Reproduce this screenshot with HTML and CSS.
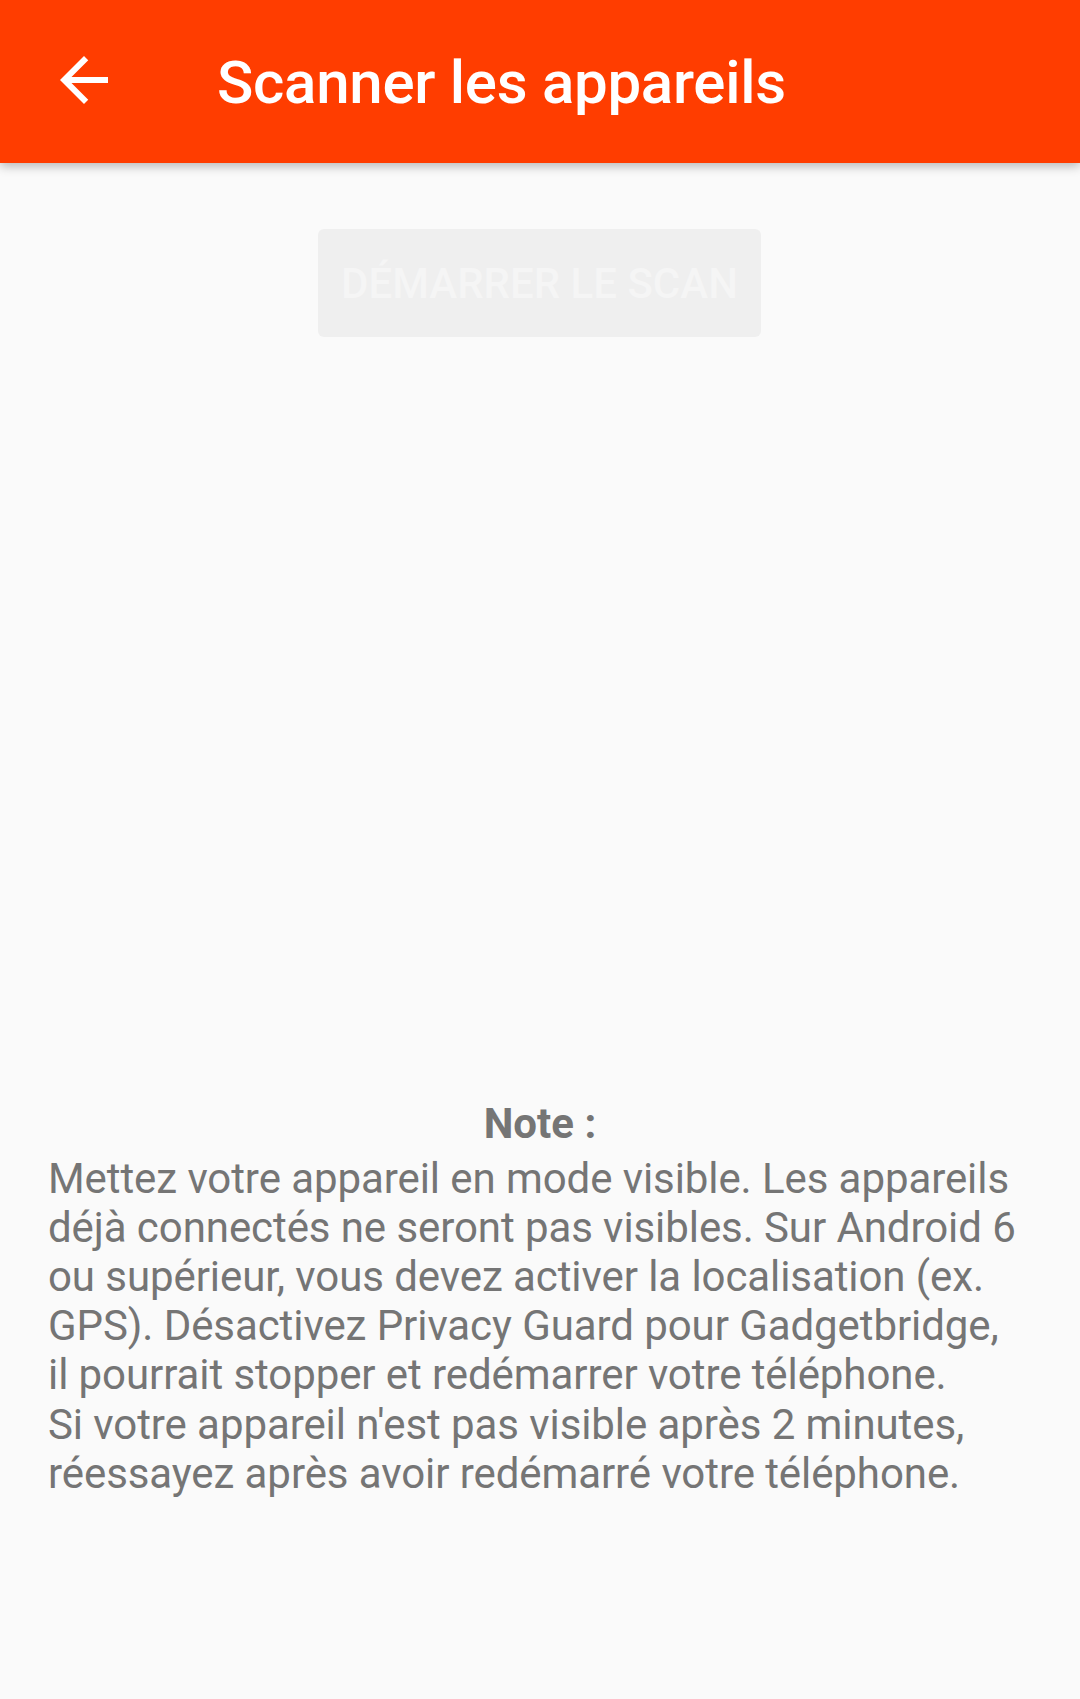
FILE: index.html
```html
<!DOCTYPE html>
<html lang="fr">
<head>
<meta charset="utf-8">
<title>Scanner les appareils</title>
<link rel="stylesheet" href="styles.css">
</head>
<body>
<div class="screen">
  <header class="toolbar">
    <button class="back" aria-label="Retour">
      <svg viewBox="0 0 24 24" width="72" height="72"><path fill="#fff" d="M20 11H7.83l5.59-5.59L12 4l-8 8 8 8 1.41-1.41L7.83 13H20v-2z"/></svg>
    </button>
    <h1 class="title">Scanner les appareils</h1>
  </header>
  <main class="content">
    <div class="scan-row">
      <button class="scan-btn" disabled>Démarrer le scan</button>
    </div>
    <div class="device-list"></div>
    <section class="note">
      <div class="note-title">Note :</div>
      <p class="note-body">Mettez votre appareil en mode visible. Les appareils<br>déjà connectés ne seront pas visibles. Sur Android 6<br>ou supérieur, vous devez activer la localisation (ex.<br>GPS). Désactivez Privacy Guard pour Gadgetbridge,<br>il pourrait stopper et redémarrer votre téléphone.<br>Si votre appareil n'est pas visible après 2 minutes,<br>réessayez après avoir redémarré votre téléphone.</p>
    </section>
  </main>
</div>
</body>
</html>
```
FILE: styles.css
```css
* { box-sizing: border-box; }
html, body { margin: 0; padding: 0; }
body {
  background: #fafafa;
  font-family: Roboto, "Noto Sans", sans-serif;
}
.screen {
  width: 1080px;
  height: 1699px;
  display: flex;
  flex-direction: column;
  overflow: hidden;
}
.toolbar {
  height: 163px;
  flex: none;
  background: #ff3d00;
  display: flex;
  align-items: center;
  box-shadow: 0 3px 10px rgba(0,0,0,0.28);
  position: relative;
  z-index: 1;
}
.back {
  width: 72px;
  height: 72px;
  margin-left: 48px;
  margin-top: -3px;
  padding: 0;
  border: 0;
  background: none;
  display: flex;
}
.title {
  margin: 2px 0 0 97px;
  color: #fff;
  font-size: 60px;
  font-weight: 500;
  line-height: 1;
  letter-spacing: -0.28px;
}
.content {
  flex: 1;
  display: flex;
  flex-direction: column;
}
.scan-row {
  display: flex;
  justify-content: center;
  padding-top: 66px;
}
.scan-btn {
  width: 443px;
  height: 108px;
  margin-left: -1px;
  border: 0;
  border-radius: 6px;
  background: #efefef;
  color: #f5f5f5;
  font-family: Roboto, "Noto Sans", sans-serif;
  font-size: 42px;
  font-weight: 500;
  text-transform: uppercase;
  padding: 0;
}
.device-list { flex: 1; }
.note {
  padding: 0 48px 201px 48px;
  color: #757575;
  font-size: 42px;
}
.note-title {
  text-align: center;
  font-weight: 700;
  line-height: 49px;
  margin-bottom: 6px;
}
.note-body {
  margin: 0;
  white-space: nowrap;
  line-height: 49.2px;
  letter-spacing: -0.08px;
}
```
